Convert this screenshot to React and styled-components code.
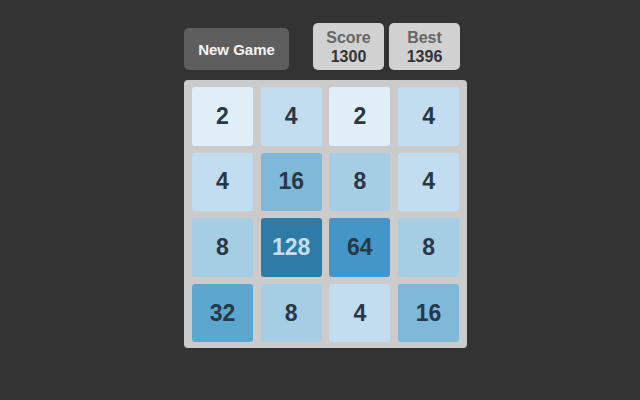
import React from 'react';
import styled, { createGlobalStyle } from 'styled-components';

const GlobalStyle = createGlobalStyle`
  html, body {
    margin: 0;
    padding: 0;
    background: #333333;
    font-family: "Liberation Sans", Arial, sans-serif;
  }
`;

const tileColors = {
  2: '#e0eff7',
  4: '#c2ddef',
  8: '#a5cde4',
  16: '#7fb8d8',
  32: '#5ca7cf',
  64: '#4396c7',
  128: '#2f7ba8',
};

const Page = styled.div`
  width: 282px;
  margin: 0 auto;
  padding: 23px 0 0 10px;
`;

const Header = styled.div`
  display: flex;
  justify-content: space-between;
  align-items: flex-end;
  margin-bottom: 10px;
`;

const NewGameButton = styled.button`
  width: 105px;
  height: 42px;
  border: none;
  border-radius: 5px;
  background: #5e5e5e;
  color: #f4f4f4;
  font-family: inherit;
  font-size: 15px;
  font-weight: bold;
  cursor: pointer;
`;

const Scores = styled.div`
  display: flex;
  gap: 5px;
  margin-right: 6px;
`;

const ScoreBox = styled.div`
  width: 71px;
  height: 47px;
  border-radius: 5px;
  background: #d1d1d1;
  display: flex;
  flex-direction: column;
  align-items: center;
  justify-content: center;
  font-weight: bold;
  font-size: 16px;
  line-height: 19px;
`;

const Label = styled.span`
  color: #666666;
`;

const Value = styled.span`
  color: #333333;
`;

const Board = styled.div`
  display: grid;
  grid-template-columns: repeat(4, 61px);
  grid-auto-rows: 58.6px;
  column-gap: 7.7px;
  row-gap: 7px;
  padding: 7px 8px 6px 8px;
  background: #cbcbcb;
  border-radius: 4px;
  width: fit-content;
`;

const Tile = styled.div`
  border-radius: 3px;
  background: ${(p) => tileColors[p.$value]};
  color: ${(p) => (p.$value >= 128 ? '#c6dff0' : '#283846')};
  display: flex;
  align-items: center;
  justify-content: center;
  font-size: 23px;
  font-weight: bold;
`;

const grid = [
  [2, 4, 2, 4],
  [4, 16, 8, 4],
  [8, 128, 64, 8],
  [32, 8, 4, 16],
];

export default function App() {
  return (
    <>
      <GlobalStyle />
      <Page>
        <Header>
          <NewGameButton>New Game</NewGameButton>
          <Scores>
            <ScoreBox>
              <Label>Score</Label>
              <Value>1300</Value>
            </ScoreBox>
            <ScoreBox>
              <Label>Best</Label>
              <Value>1396</Value>
            </ScoreBox>
          </Scores>
        </Header>
        <Board>
          {grid.flat().map((v, i) => (
            <Tile key={i} $value={v}>
              {v}
            </Tile>
          ))}
        </Board>
      </Page>
    </>
  );
}
